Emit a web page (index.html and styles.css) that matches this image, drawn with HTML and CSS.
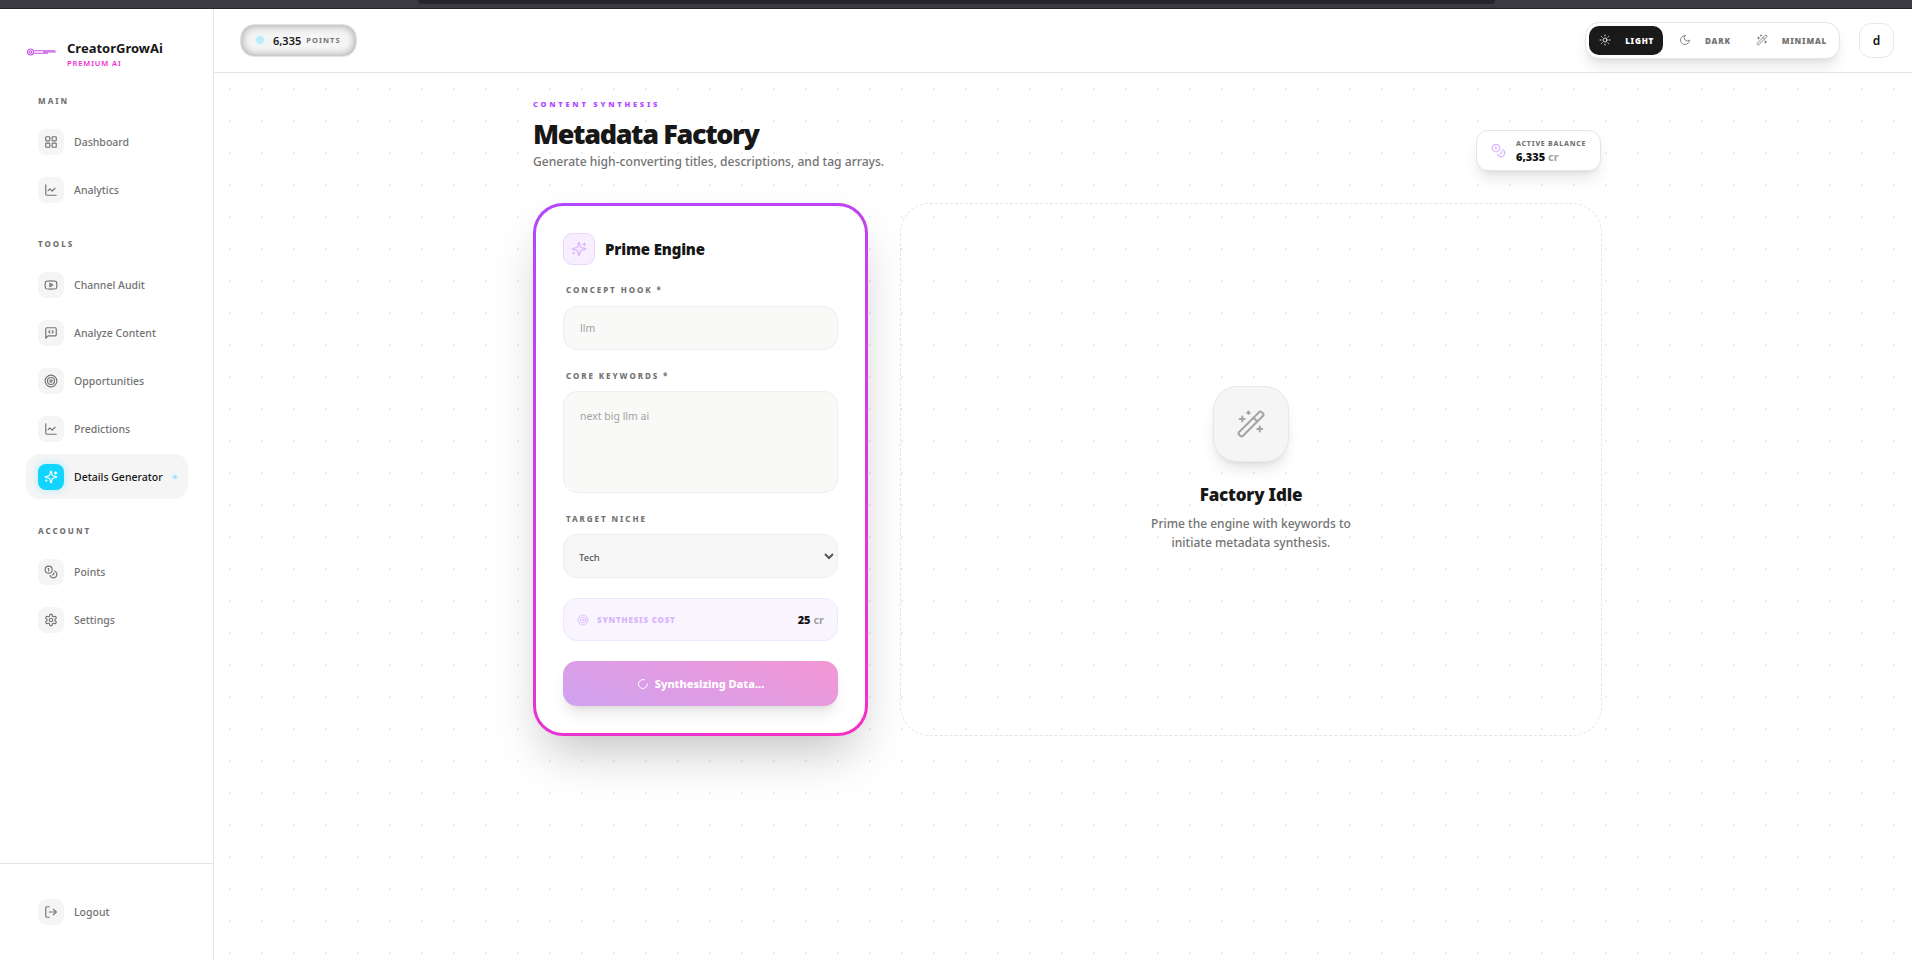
FILE: index.html
```html
<!DOCTYPE html>
<html>
<head>
    <meta charset="utf-8" />
    <title>Metadata Factory</title>
    <link rel="stylesheet" href="styles.css">
</head>
<body>
    <svg class="sprite" xmlns="http://www.w3.org/2000/svg">
        <symbol id="i-grid" viewBox="0 0 24 24"><rect x="3" y="3" width="7" height="7" rx="1"/><rect x="14" y="3" width="7" height="7" rx="1"/><rect x="14" y="14" width="7" height="7" rx="1"/><rect x="3" y="14" width="7" height="7" rx="1"/></symbol>
        <symbol id="i-chart" viewBox="0 0 24 24"><path d="M3 3v16a2 2 0 0 0 2 2h16"/><path d="m19 9-5 5-4-4-3 3"/></symbol>
        <symbol id="i-youtube" viewBox="0 0 24 24"><path d="M2.5 17a24.12 24.12 0 0 1 0-10 2 2 0 0 1 1.4-1.4 49.56 49.56 0 0 1 16.2 0A2 2 0 0 1 21.5 7a24.12 24.12 0 0 1 0 10 2 2 0 0 1-1.4 1.4 49.55 49.55 0 0 1-16.2 0A2 2 0 0 1 2.5 17"/><path d="m10 15 5-3-5-3z"/></symbol>
        <symbol id="i-message" viewBox="0 0 24 24"><path d="M21 15a2 2 0 0 1-2 2H7l-4 4V5a2 2 0 0 1 2-2h14a2 2 0 0 1 2 2z"/><path d="m10 8-2 2 2 2"/><path d="m14 8 2 2-2 2"/></symbol>
        <symbol id="i-target" viewBox="0 0 24 24"><circle cx="12" cy="12" r="10"/><circle cx="12" cy="12" r="6"/><circle cx="12" cy="12" r="2"/></symbol>
        <symbol id="i-sparkles" viewBox="0 0 24 24"><path d="M9.937 15.5A2 2 0 0 0 8.5 14.063l-6.135-1.582a.5.5 0 0 1 0-.962L8.5 9.936A2 2 0 0 0 9.937 8.5l1.582-6.135a.5.5 0 0 1 .963 0L14.063 8.5A2 2 0 0 0 15.5 9.937l6.135 1.581a.5.5 0 0 1 0 .964L15.5 14.063a2 2 0 0 0-1.437 1.437l-1.582 6.135a.5.5 0 0 1-.963 0z"/><path d="M20 3v4"/><path d="M22 5h-4"/><path d="M4 17v2"/><path d="M5 18H3"/></symbol>
        <symbol id="i-coins" viewBox="0 0 24 24"><circle cx="8" cy="8" r="6"/><path d="M18.09 10.37A6 6 0 1 1 10.34 18"/><path d="M7 6h1v4"/><path d="m16.71 13.88.7.71-2.82 2.82"/></symbol>
        <symbol id="i-settings" viewBox="0 0 24 24"><path d="M12.22 2h-.44a2 2 0 0 0-2 2v.18a2 2 0 0 1-1 1.73l-.43.25a2 2 0 0 1-2 0l-.15-.08a2 2 0 0 0-2.73.73l-.22.38a2 2 0 0 0 .73 2.73l.15.1a2 2 0 0 1 1 1.72v.51a2 2 0 0 1-1 1.74l-.15.09a2 2 0 0 0-.73 2.73l.22.38a2 2 0 0 0 2.73.73l.15-.08a2 2 0 0 1 2 0l.43.25a2 2 0 0 1 1 1.73V20a2 2 0 0 0 2 2h.44a2 2 0 0 0 2-2v-.18a2 2 0 0 1 1-1.73l.43-.25a2 2 0 0 1 2 0l.15.08a2 2 0 0 0 2.73-.73l.22-.39a2 2 0 0 0-.73-2.73l-.15-.08a2 2 0 0 1-1-1.74v-.5a2 2 0 0 1 1-1.74l.15-.09a2 2 0 0 0 .73-2.73l-.22-.38a2 2 0 0 0-2.73-.73l-.15.08a2 2 0 0 1-2 0l-.43-.25a2 2 0 0 1-1-1.73V4a2 2 0 0 0-2-2z"/><circle cx="12" cy="12" r="3"/></symbol>
        <symbol id="i-logout" viewBox="0 0 24 24"><path d="M9 21H5a2 2 0 0 1-2-2V5a2 2 0 0 1 2-2h4"/><path d="m16 17 5-5-5-5"/><path d="M21 12H9"/></symbol>
        <symbol id="i-sun" viewBox="0 0 24 24"><circle cx="12" cy="12" r="4"/><path d="M12 2v2"/><path d="M12 20v2"/><path d="m4.93 4.93 1.41 1.41"/><path d="m17.66 17.66 1.41 1.41"/><path d="M2 12h2"/><path d="M20 12h2"/><path d="m6.34 17.66-1.41 1.41"/><path d="m19.07 4.93-1.41 1.41"/></symbol>
        <symbol id="i-moon" viewBox="0 0 24 24"><path d="M12 3a6 6 0 0 0 9 9 9 9 0 1 1-9-9Z"/></symbol>
        <symbol id="i-wand" viewBox="0 0 24 24"><path d="m21.64 3.64-1.28-1.28a1.21 1.21 0 0 0-1.72 0L2.36 18.64a1.21 1.21 0 0 0 0 1.72l1.28 1.28a1.2 1.2 0 0 0 1.72 0L21.64 5.36a1.2 1.2 0 0 0 0-1.72"/><path d="m14 7 3 3"/><path d="M5 6v4"/><path d="M19 14v4"/><path d="M10 2v2"/><path d="M7 8H3"/><path d="M21 16h-4"/><path d="M11 3H9"/></symbol>
        <symbol id="i-loader" viewBox="0 0 24 24"><path d="M21 12a9 9 0 1 1-6.219-8.56"/></symbol>
    </svg>

    <div class="browser-strip"><div class="browser-tab"></div></div>

    <div class="app">
        <aside class="sidebar">
            <div class="brand">
                <svg class="brand-logo" viewBox="0 0 30 8">
                    <circle cx="3.5" cy="4" r="3"/>
                    <circle cx="3.5" cy="4" r="1.2"/>
                    <path d="M7 2.8h21M7 5.2h14M16 4h13"/>
                </svg>
                <div class="brand-text">
                    <div class="brand-name">CreatorGrowAi</div>
                    <div class="brand-tag">PREMIUM AI</div>
                </div>
            </div>

            <div class="nav-label">MAIN</div>
            <div class="nav-item"><span class="nav-icon"><svg class="icon"><use href="#i-grid"/></svg></span>Dashboard</div>
            <div class="nav-item"><span class="nav-icon"><svg class="icon"><use href="#i-chart"/></svg></span>Analytics</div>

            <div class="nav-label">TOOLS</div>
            <div class="nav-item"><span class="nav-icon"><svg class="icon"><use href="#i-youtube"/></svg></span>Channel Audit</div>
            <div class="nav-item"><span class="nav-icon"><svg class="icon"><use href="#i-message"/></svg></span>Analyze Content</div>
            <div class="nav-item"><span class="nav-icon"><svg class="icon"><use href="#i-target"/></svg></span>Opportunities</div>
            <div class="nav-item"><span class="nav-icon"><svg class="icon"><use href="#i-chart"/></svg></span>Predictions</div>
            <div class="nav-item active"><span class="nav-icon"><svg class="icon"><use href="#i-sparkles"/></svg></span>Details Generator<span class="nav-dot"></span></div>

            <div class="nav-label">ACCOUNT</div>
            <div class="nav-item"><span class="nav-icon"><svg class="icon"><use href="#i-coins"/></svg></span>Points</div>
            <div class="nav-item"><span class="nav-icon"><svg class="icon"><use href="#i-settings"/></svg></span>Settings</div>

            <div class="sidebar-foot">
                <div class="nav-item"><span class="nav-icon"><svg class="icon"><use href="#i-logout"/></svg></span>Logout</div>
            </div>
        </aside>

        <div class="main">
            <header class="topbar">
                <div class="points-pill">
                    <span class="points-gem"></span>
                    <span class="points-num">6,335</span>
                    <span class="points-word">POINTS</span>
                </div>
                <div class="topbar-right">
                    <div class="theme-switch">
                        <div class="theme-btn selected"><svg class="icon"><use href="#i-sun"/></svg>LIGHT</div>
                        <div class="theme-btn"><svg class="icon"><use href="#i-moon"/></svg>DARK</div>
                        <div class="theme-btn"><svg class="icon"><use href="#i-wand"/></svg>MINIMAL</div>
                    </div>
                    <div class="avatar">d</div>
                </div>
            </header>

            <main class="content">
                <div class="page">
                    <div class="page-head">
                        <div>
                            <div class="kicker">CONTENT SYNTHESIS</div>
                            <h1>Metadata Factory</h1>
                            <p class="subtitle">Generate high-converting titles, descriptions, and tag arrays.</p>
                        </div>
                        <div class="balance">
                            <svg class="icon"><use href="#i-coins"/></svg>
                            <div>
                                <div class="balance-label">ACTIVE BALANCE</div>
                                <div class="balance-num">6,335 <span>cr</span></div>
                            </div>
                        </div>
                    </div>

                    <div class="columns">
                        <section class="engine">
                            <div class="engine-head">
                                <span class="engine-icon"><svg class="icon"><use href="#i-sparkles"/></svg></span>
                                <h2>Prime Engine</h2>
                            </div>
                            <div class="field first">
                                <label>CONCEPT HOOK *</label>
                                <input type="text" value="llm">
                            </div>
                            <div class="field">
                                <label>CORE KEYWORDS *</label>
                                <textarea>next big llm ai</textarea>
                            </div>
                            <div class="field">
                                <label>TARGET NICHE</label>
                                <select><option>Tech</option></select>
                            </div>
                            <div class="cost">
                                <svg class="icon"><use href="#i-target"/></svg>
                                <span class="cost-label">SYNTHESIS COST</span>
                                <span class="cost-num">25 <span>cr</span></span>
                            </div>
                            <div class="submit"><svg class="icon"><use href="#i-loader"/></svg>Synthesizing Data...</div>
                        </section>

                        <section class="idle">
                            <div class="idle-icon"><svg class="icon"><use href="#i-wand"/></svg></div>
                            <h3>Factory Idle</h3>
                            <p>Prime the engine with keywords to<br>initiate metadata synthesis.</p>
                        </section>
                    </div>
                </div>
            </main>
        </div>
    </div>
</body>
</html>
```

FILE: styles.css
```css
* {
    box-sizing: border-box;
}

html, body {
    height: 100%;
}

body {
    margin: 0;
    height: 960px;
    overflow: hidden;
    display: flex;
    flex-direction: column;
    background: white;
    color: #171717;
    font-family: "Noto Sans", "Open Sans", sans-serif;
}

h1, h2, h3, p {
    margin: 0;
}

.sprite {
    display: none;
}

.icon {
    width: 14px;
    height: 14px;
    flex: none;
    fill: none;
    stroke: currentColor;
    stroke-width: 2;
    stroke-linecap: round;
    stroke-linejoin: round;
}

.browser-strip {
    height: 9px;
    flex: none;
    background: #3b3a40;
    border-bottom: 1px solid #26252a;
    display: flex;
    justify-content: center;
    padding-left: 1px;
}

.browser-tab {
    width: 1077px;
    height: 4px;
    background: #26252b;
    border-radius: 0 0 5px 5px;
}

.app {
    flex: 1;
    display: flex;
    min-height: 0;
}

/* sidebar */
.sidebar {
    width: 214px;
    flex: none;
    display: flex;
    flex-direction: column;
    border-right: 1px solid #e5e5e5;
    background: white;
}

.brand {
    height: 86px;
    flex: none;
    display: flex;
    align-items: center;
    gap: 10px;
    padding-left: 27px;
}

.brand-logo {
    width: 30px;
    height: 8px;
    fill: none;
    stroke: #c653e6;
    stroke-width: 1.1;
}

.brand-text {
    margin-top: 4px;
}

.brand-name {
    font-size: 13px;
    line-height: 18px;
    font-weight: 700;
    color: #171717;
}

.brand-tag {
    font-size: 7.5px;
    line-height: 12px;
    font-weight: 600;
    letter-spacing: 0.12em;
    color: #ee2fd0;
}

.nav-label {
    margin: 0 0 12px 38px;
    font-size: 8px;
    line-height: 12px;
    font-weight: 800;
    letter-spacing: 0.25em;
    color: #737373;
}

.nav-item + .nav-label {
    margin-top: 23px;
}

.nav-item {
    height: 45px;
    flex: none;
    margin: 0 25px 3px 26px;
    padding: 0 12px;
    display: flex;
    align-items: center;
    gap: 10px;
    border-radius: 14px;
    font-size: 10.5px;
    font-weight: 500;
    white-space: nowrap;
    color: #737373;
}

.nav-icon {
    width: 26px;
    height: 26px;
    flex: none;
    display: flex;
    align-items: center;
    justify-content: center;
    border-radius: 8px;
    background: #f5f5f5;
    color: #737373;
}

.nav-item.active {
    background: #f5f5f5;
    color: #171717;
}

.nav-item.active .nav-icon {
    background: #12d5ff;
    color: white;
    box-shadow: 0 0 8px rgba(18, 213, 255, 0.3);
}

.nav-dot {
    width: 4px;
    height: 4px;
    flex: none;
    margin-left: auto;
    margin-right: 1px;
    border-radius: 50%;
    background: #a5e4ff;
    box-shadow: 0 0 4px #c6f0ff;
}

.sidebar-foot {
    margin-top: auto;
    height: 97px;
    flex: none;
    padding-top: 25px;
    border-top: 1px solid #e5e5e5;
}

/* top bar */
.main {
    flex: 1;
    min-width: 0;
    display: flex;
    flex-direction: column;
}

.topbar {
    height: 64px;
    flex: none;
    display: flex;
    align-items: center;
    justify-content: space-between;
    padding: 0 18px 1px 26px;
    border-bottom: 1px solid #e5e5e5;
    background: white;
}

.points-pill {
    width: 117px;
    height: 33px;
    display: flex;
    align-items: center;
    padding-left: 15px;
    border: 1px solid #e5e5e5;
    border-radius: 14px;
    background: #f5f5f5;
    box-shadow: inset 0 0 10px rgba(0, 0, 0, 0.38);
}

.points-gem {
    width: 8px;
    height: 8px;
    border-radius: 50%;
    background: #bdebf8;
    box-shadow: 0 0 5px #d6f6ff;
}

.points-num {
    margin-left: 9px;
    font-size: 11px;
    font-weight: 600;
    color: #171717;
}

.points-word {
    margin-left: 5px;
    font-size: 7.5px;
    font-weight: 700;
    letter-spacing: 0.14em;
    color: #737373;
}

.topbar-right {
    display: flex;
    align-items: center;
    gap: 19px;
}

.theme-switch {
    height: 37px;
    display: flex;
    gap: 6px;
    padding: 3px;
    background: white;
    border: 1px solid #e5e5e5;
    border-radius: 14px;
    box-shadow: 0 10px 15px -3px rgba(0, 0, 0, 0.1), 0 4px 6px -4px rgba(0, 0, 0, 0.1);
}

.theme-btn {
    display: flex;
    align-items: center;
    gap: 14px;
    padding: 0 9px 0 10px;
    border-radius: 10px;
    font-size: 8px;
    font-weight: 900;
    letter-spacing: 0.1em;
    color: #737373;
}

.theme-btn .icon {
    width: 12px;
    height: 12px;
    stroke-width: 1.7;
}

.theme-btn.selected {
    background: #1a1a1a;
    color: white;
}

.avatar {
    width: 35px;
    height: 35px;
    display: flex;
    align-items: center;
    justify-content: center;
    border: 1px solid #e8e8e8;
    border-radius: 12px;
    font-size: 12px;
    font-weight: 600;
    color: #111;
}

/* page */
.content {
    flex: 1;
    min-height: 0;
    padding: 25px 0 0 9px;
    background-color: white;
    background-image: radial-gradient(circle, #eeeeee 1px, transparent 1.5px);
    background-size: 32px 32px;
}

.page {
    width: 1069px;
    margin: 0 auto;
}

.page-head {
    display: flex;
    align-items: flex-end;
    justify-content: space-between;
    padding-right: 1px;
}

.kicker {
    font-size: 7.5px;
    line-height: 12px;
    font-weight: 900;
    letter-spacing: 0.37em;
    color: #b44cff;
}

h1 {
    margin-top: 6px;
    font-size: 27px;
    line-height: 36px;
    font-weight: 900;
    letter-spacing: -0.05em;
    color: #171717;
}

.subtitle {
    font-size: 12.1px;
    line-height: 19px;
    font-weight: 500;
    color: #737373;
}

.balance {
    width: 125px;
    height: 41px;
    display: flex;
    align-items: center;
    gap: 10px;
    padding-left: 14px;
    background: white;
    border: 1px solid #e5e5e5;
    border-radius: 12px;
    box-shadow: 0 10px 15px -3px rgba(0, 0, 0, 0.1), 0 4px 6px -4px rgba(0, 0, 0, 0.1);
}

.balance .icon {
    width: 15px;
    height: 15px;
    color: #d8b4fe;
}

.balance-label {
    font-size: 7px;
    line-height: 11px;
    font-weight: 800;
    letter-spacing: 0.11em;
    color: #737373;
}

.balance-num {
    font-size: 11px;
    line-height: 15px;
    font-weight: 900;
    color: #111;
}

.balance-num span, .cost-num span {
    color: #a3a3a3;
    font-weight: 700;
}

.columns {
    margin-top: 32px;
    display: grid;
    grid-template-columns: 335px 702px;
    gap: 32px;
    height: 533px;
}

/* form card */
.engine {
    display: flex;
    flex-direction: column;
    gap: 20px;
    padding: 27px;
    border: 3px solid transparent;
    border-radius: 30px;
    background: linear-gradient(white, white) padding-box, linear-gradient(155deg, #b147ff, #f52fc4) border-box;
    box-shadow: 0 25px 50px -12px rgba(0, 0, 0, 0.25);
}

.engine-head {
    display: flex;
    align-items: center;
    gap: 10px;
}

.engine-icon {
    width: 32px;
    height: 32px;
    display: flex;
    align-items: center;
    justify-content: center;
    border: 1px solid #ecd5ff;
    border-radius: 9px;
    background: #f7eeff;
    color: #dcb6fb;
}

.engine-icon .icon {
    width: 16px;
    height: 16px;
}

h2 {
    font-size: 15px;
    font-weight: 900;
    letter-spacing: -0.01em;
    color: #171717;
}

.field {
    display: flex;
    flex-direction: column;
    gap: 9px;
}

.field.first {
    margin-top: -1px;
    gap: 10px;
}

.field label {
    padding-left: 3px;
    font-size: 8px;
    line-height: 12px;
    font-weight: 800;
    letter-spacing: 0.24em;
    color: #737373;
}

.field input, .field textarea, .field select {
    width: 100%;
    display: block;
    padding: 0 16px;
    border: 1px solid #eeeeee;
    border-radius: 14px;
    background-color: #f9f9f8;
    outline: none;
    font-family: inherit;
    font-size: 10.5px;
    color: #a3a3a3;
}

.field input {
    height: 44px;
}

.field textarea {
    height: 102px;
    padding-top: 16px;
    line-height: 16px;
    resize: none;
}

.field select {
    height: 44px;
    padding: 2px 0 0 11px;
    background-color: #f7f7f7;
    font-size: 9.5px;
    font-weight: 500;
    color: #555;
}

.cost {
    height: 43px;
    display: flex;
    align-items: center;
    gap: 8px;
    padding: 0 13px;
    border: 1px solid #f0e4ff;
    border-radius: 14px;
    background: #f9f5ff;
}

.cost .icon {
    width: 12px;
    height: 12px;
    stroke-width: 1.5;
    color: #d8b4fe;
}

.cost-label {
    font-size: 8px;
    font-weight: 900;
    letter-spacing: 0.1em;
    color: #d8b4fe;
}

.cost-num {
    margin-left: auto;
    font-size: 11px;
    font-weight: 900;
    color: #111;
}

.submit {
    height: 45px;
    display: flex;
    align-items: center;
    justify-content: center;
    gap: 6px;
    border-radius: 14px;
    background: linear-gradient(20deg, #cfa2f0, #f396d4);
    box-shadow: 0 10px 15px -3px rgba(0, 0, 0, 0.1), 0 4px 6px -4px rgba(0, 0, 0, 0.1);
    font-size: 11px;
    font-weight: 800;
    color: white;
}

.submit .icon {
    width: 12px;
    height: 12px;
}

/* empty state */
.idle {
    display: flex;
    flex-direction: column;
    align-items: center;
    justify-content: center;
    padding-bottom: 2px;
    border: 1px dashed #e5e5e5;
    border-radius: 30px;
    text-align: center;
}

.idle-icon {
    width: 76px;
    height: 76px;
    display: flex;
    align-items: center;
    justify-content: center;
    border: 1px solid #e8e8e8;
    border-radius: 24px;
    background: #f5f5f5;
    color: #a3a3a3;
    box-shadow: 0 10px 15px -3px rgba(0, 0, 0, 0.1), 0 4px 6px -4px rgba(0, 0, 0, 0.1);
}

.idle-icon .icon {
    width: 30px;
    height: 30px;
    stroke-width: 1.6;
}

h3 {
    margin-top: 20px;
    font-size: 17px;
    line-height: 26px;
    font-weight: 900;
    letter-spacing: -0.01em;
    color: #171717;
}

.idle p {
    margin-top: 6px;
    font-size: 12px;
    line-height: 19px;
    font-weight: 500;
    color: #737373;
}
```
